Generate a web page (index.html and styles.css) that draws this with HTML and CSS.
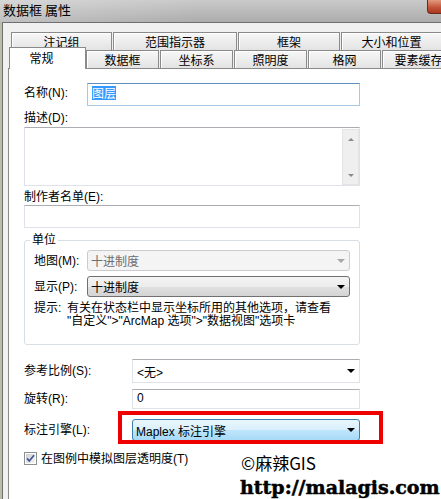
FILE: index.html
```html
<!DOCTYPE html>
<html>
<head>
  <meta charset="UTF-8">
  <title>数据框 属性</title>
  <link rel="stylesheet" href="styles.css">
</head>
<body>

<div class="window">
  <div class="titlebar">
    <span class="title">数据框 属性</span>
    <span class="close-btn"></span>
  </div>

  <div class="frame">
    <!-- back row of tabs -->
    <div class="tab-row back">
      <div class="tab">注记组</div>
      <div class="tab tab-wide">范围指示器</div>
      <div class="tab tab-mid">框架</div>
      <div class="tab">大小和位置</div>
    </div>
    <!-- front row, holds the selected tab -->
    <div class="tab-row front">
      <div class="tab active">常规</div>
      <div class="tab">数据框</div>
      <div class="tab">坐标系</div>
      <div class="tab">照明度</div>
      <div class="tab">格网</div>
      <div class="tab">要素缓存</div>
    </div>

    <div class="panel">
      <div class="form">

        <div class="field-row name-row">
          <label class="lbl lbl-name">名称(N):</label>
          <div class="input focused"><span class="selected-text">图层</span></div>
        </div>

        <div class="lbl block-lbl desc-lbl">描述(D):</div>
        <div class="textarea">
          <div class="scrollbar">
            <span class="sb-up"></span>
            <span class="sb-down"></span>
          </div>
        </div>

        <div class="lbl block-lbl credits-lbl">制作者名单(E):</div>
        <div class="input credits-input"></div>

        <fieldset class="group">
          <legend>单位</legend>
          <div class="field-row unit-row">
            <label class="lbl lbl-unit">地图(M):</label>
            <div class="combo disabled"><span>十进制度</span><span class="arrow"></span></div>
          </div>
          <div class="field-row unit-row second">
            <label class="lbl lbl-unit">显示(P):</label>
            <div class="combo button"><span>十进制度</span><span class="arrow"></span></div>
          </div>
          <div class="hint">
            <span class="hint-head">提示:</span>
            <span class="hint-body">有关在状态栏中显示坐标所用的其他选项，请查看<br>"自定义"&gt;"ArcMap 选项"&gt;"数据视图"选项卡</span>
          </div>
        </fieldset>

        <div class="field-row scale-row">
          <label class="lbl lbl-wide">参考比例(S):</label>
          <div class="combo plain"><span>&lt;无&gt;</span><span class="arrow"></span></div>
        </div>

        <div class="field-row rotate-row">
          <label class="lbl lbl-wide">旋转(R):</label>
          <div class="input rotate-input">0</div>
        </div>

        <div class="field-row engine-row">
          <label class="lbl lbl-wide">标注引擎(L):</label>
          <div class="combo hot"><span>Maplex 标注引擎</span><span class="arrow"></span></div>
          <span class="red-box"></span>
        </div>

        <div class="check-row">
          <svg class="checkbox" width="13" height="13" viewBox="0 0 13 13">
            <defs>
              <linearGradient id="cbg" x1="0" y1="0" x2="1" y2="1">
                <stop offset="0" stop-color="#cbcfd5"/>
                <stop offset="1" stop-color="#f6f6f6"/>
              </linearGradient>
            </defs>
            <rect x="0.5" y="0.5" width="12" height="12" fill="#fff" stroke="#8e8f8f"/>
            <rect x="2" y="2" width="9" height="9" fill="url(#cbg)"/>
            <path d="M3 6.4 L5.3 9 L10 3.3" fill="none" stroke="#3f5591" stroke-width="1.7"/>
          </svg>
          <span class="check-lbl">在图例中模拟图层透明度(T)</span>
        </div>

      </div>
    </div>
  </div>

  <div class="watermark">
    <div class="wm-line1">©麻辣GIS</div>
    <div class="wm-line2">http://malagis.com</div>
  </div>
</div>

</body>
</html>
```

FILE: styles.css
```css
* {
	box-sizing: border-box;
}

body {
	margin: 0;
	width: 441px;
	height: 499px;
	overflow: hidden;
	background: #bdbba9;
	font-family: "Liberation Sans", "Noto Sans CJK SC", sans-serif;
	font-size: 12px;
	color: #000;
}

.window {
	position: relative;
	height: 499px;
	display: flex;
	flex-direction: column;
}

/* Aero style title bar */
.titlebar {
	height: 22px;
	flex: none;
	display: flex;
	justify-content: space-between;
	align-items: flex-start;
	padding-left: 3px;
	background: linear-gradient(to right, rgba(255,255,255,0.25), rgba(255,255,255,0) 45%),
		linear-gradient(#cacaca, #acacac);
	font-family: "Noto Sans CJK SC", sans-serif;
	font-size: 13px;
	line-height: 19px;
}

.close-btn {
	width: 14px;
	height: 14px;
	background: linear-gradient(#e39a80, #c4553a 55%, #a9381f);
	border-left: 1px solid #6b2a1e;
	border-bottom: 1px solid #6b2a1e;
	border-bottom-left-radius: 4px;
}

.frame {
	flex: 1;
	display: flex;
	flex-direction: column;
	margin-left: 2px;
	border-left: 1px solid #6f6f6f;
	border-top: 1px solid #6f6f6f;
	background: #f0f0f0;
	padding: 9px 0 0 5px;
}

/* Tabs */
.tab-row {
	display: flex;
	gap: 1px;
	height: 18px;
	flex: none;
}

.tab-row.back {
	margin-left: 3px;
}

.tab-row.front {
	margin-left: 1px;
}

.tab {
	flex: none;
	width: 73px;
	height: 18px;
	border: 1px solid #8a8a8a;
	border-bottom: none;
	background: linear-gradient(#f7f7f7, #e3e3e3);
	box-shadow: inset 1px 1px 0 #fff;
	text-align: center;
	line-height: 17px;
	font-family: "Noto Sans CJK SC", sans-serif;
	white-space: nowrap;
}

.back .tab {
	width: 101px;
}

.back .tab-wide {
	width: 124px;
}

.back .tab-mid {
	width: 102px;
}

.tab.active {
	width: 77px;
	height: 22px;
	margin-top: -3px;
	margin-right: -1px;
	padding-right: 12px;
	background: #fff;
	box-shadow: none;
	line-height: 19px;
	position: relative;
	z-index: 1;
}

.panel {
	flex: 1;
	background: #fff;
	border-top: 1px solid #8a8a8a;
	border-left: 1px solid #8a8a8a;
	padding-left: 15px;
}

.form {
	width: 336px;
}

/* Rows and labels */
.field-row {
	display: flex;
	align-items: center;
}

.lbl {
	flex: none;
	line-height: 14px;
	white-space: nowrap;
}

.lbl-name {
	width: 63px;
	margin-top: -3px;
}

.lbl-unit {
	width: 53px;
}

.lbl-wide {
	width: 108px;
}

.block-lbl {
	display: block;
}

.name-row {
	margin-top: 14px;
	height: 23px;
}

.desc-lbl {
	margin-top: 5px;
}

.credits-lbl {
	margin-top: 4px;
}

/* Text boxes */
.input {
	flex: 1;
	height: 23px;
	border: 1px solid #dfe2e8;
	border-top-color: #abadb3;
	background: #fff;
	padding-left: 4px;
	line-height: 20px;
}

.input.focused {
	border-color: #a9c9e6;
	border-top-color: #5a8fbf;
	padding-left: 4px;
}

.selected-text {
	background: #3399ff;
	color: #fff;
	font-family: "Noto Sans CJK SC", sans-serif;
	display: inline-block;
	line-height: 14px;
	margin-top: 2px;
	vertical-align: top;
}

.textarea {
	margin-top: 2px;
	height: 59px;
	border: 1px solid #dfe2e8;
	border-top-color: #abadb3;
	display: flex;
	justify-content: flex-end;
	padding: 1px 0 0 0;
}

.scrollbar {
	width: 17px;
	height: 56px;
	background: #efefef;
	border: 1px solid #e4e4e4;
	display: flex;
	flex-direction: column;
	justify-content: space-between;
	align-items: center;
	padding: 8px 0 7px;
}

.sb-up {
	width: 0;
	height: 0;
	border-left: 3px solid transparent;
	border-right: 3px solid transparent;
	border-bottom: 3px solid #8a8a8a;
}

.sb-down {
	width: 0;
	height: 0;
	border-left: 3px solid transparent;
	border-right: 3px solid transparent;
	border-top: 3px solid #8a8a8a;
}

.credits-input {
	display: block;
	margin-top: 1px;
}

/* Units group */
.group {
	margin: 5px 0 0 0;
	padding: 3px 9px 16px 9px;
	border: 1px solid #d5dfe5;
	border-radius: 3px;
}

.group legend {
	padding: 0 2px;
	margin-left: -4px;
	line-height: 14px;
}

.unit-row {
	height: 21px;
}

.unit-row.second {
	margin-top: 5px;
}

/* Drop down boxes */
.combo {
	flex: 1;
	height: 100%;
	display: flex;
	justify-content: space-between;
	align-items: center;
	padding: 0 4px 0 3px;
	border: 1px solid #dfe2e8;
	border-top-color: #abadb3;
	background: #fff;
	white-space: nowrap;
}

.arrow {
	width: 0;
	height: 0;
	border-left: 4px solid transparent;
	border-right: 4px solid transparent;
	border-top: 4px solid #000;
}

.combo.disabled {
	border: 1px solid #c9cbcc;
	border-radius: 3px;
	background: #f4f4f4;
	color: #6d6d6d;
}

.combo.disabled .arrow {
	border-top-color: #a6a6a6;
}

.combo.button {
	border: 1px solid #707070;
	border-radius: 3px;
	background: linear-gradient(#f4f4f4, #ececec 50%, #e0e0e0 52%, #d4d4d4);
}

.combo.plain {
	padding-left: 4px;
}

.combo.hot {
	border: 1px solid #3c7fb1;
	border-radius: 3px;
	background: linear-gradient(#eaf6fd, #d9f0fc 48%, #bee6fd 52%, #a7d9f5);
}

.hint {
	display: flex;
	margin-top: 5px;
	line-height: 13px;
}

.hint-head {
	width: 33px;
	flex: none;
}

.scale-row {
	margin-top: 14px;
	height: 24px;
}

.rotate-row {
	margin-top: 6px;
	height: 20px;
}

.rotate-input {
	height: 20px;
	line-height: 17px;
}

.engine-row {
	margin-top: 10px;
	height: 22px;
	position: relative;
}

/* red annotation frame drawn over the label engine box */
.red-box {
	position: absolute;
	left: 94px;
	top: -8px;
	width: 265px;
	height: 33px;
	border: 4px solid #ee0000;
}

.check-row {
	margin-top: 11px;
	display: flex;
	align-items: center;
	height: 13px;
}

.check-lbl {
	margin-left: 4px;
	line-height: 14px;
}

/* watermark stamped on the screenshot */
.watermark {
	position: absolute;
	left: 240px;
	top: 453px;
}

.wm-line1 {
	font-family: "Noto Sans CJK SC", sans-serif;
	font-size: 17px;
	line-height: 20px;
	padding-left: 1px;
}

.wm-line2 {
	margin-top: 3px;
	font-family: "DejaVu Serif", serif;
	font-weight: bold;
	font-size: 19px;
	line-height: 22px;
	-webkit-text-stroke: 0.5px #000;
}
```
